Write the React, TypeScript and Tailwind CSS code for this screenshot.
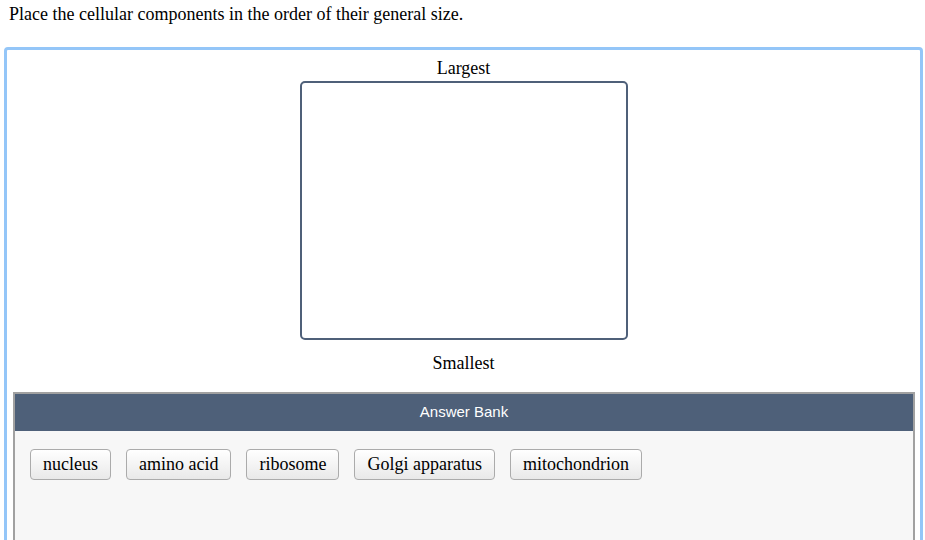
import React from "react";

const answers = ["nucleus", "amino acid", "ribosome", "Golgi apparatus", "mitochondrion"];

const App: React.FC = () => {
  return (
    <div className="h-[540px] w-[925px] overflow-hidden bg-white font-['Liberation_Serif',serif] text-[18px] text-black">
      <p className="pl-[9px] pt-[4px] leading-[20px]">
        Place the cellular components in the order of their general size.
      </p>

      <div className="ml-[4px] mt-[23px] h-[600px] w-[919px] rounded-[4px] border-[3px] border-[#94c6f8] bg-white">
        <div className="flex flex-col items-center pt-[8px]">
          <div className="leading-[20px]">Largest</div>
          <div className="mt-[3px] h-[259px] w-[328px] rounded-[5px] border-2 border-[#4f6079]" />
          <div className="mt-[13px] leading-[20px]">Smallest</div>
        </div>

        <div className="ml-[6px] mr-[5px] mt-[19px] border-2 border-[#a1a1a1] bg-[#f7f7f7]">
          <div className="flex h-[37px] items-center justify-center bg-[#4e6079] font-['Liberation_Sans',sans-serif] text-[15px] text-white">
            Answer Bank
          </div>
          <div className="flex flex-wrap gap-[15px] px-[15px] pt-[18px] pb-[80px]">
            {answers.map((a) => (
              <div
                key={a}
                className="rounded-[4px] border border-[#ababab] bg-gradient-to-b from-white to-[#e9e9e9] px-[12px] py-[5px] leading-[19px]"
              >
                {a}
              </div>
            ))}
          </div>
        </div>
      </div>
    </div>
  );
};

export default App;
